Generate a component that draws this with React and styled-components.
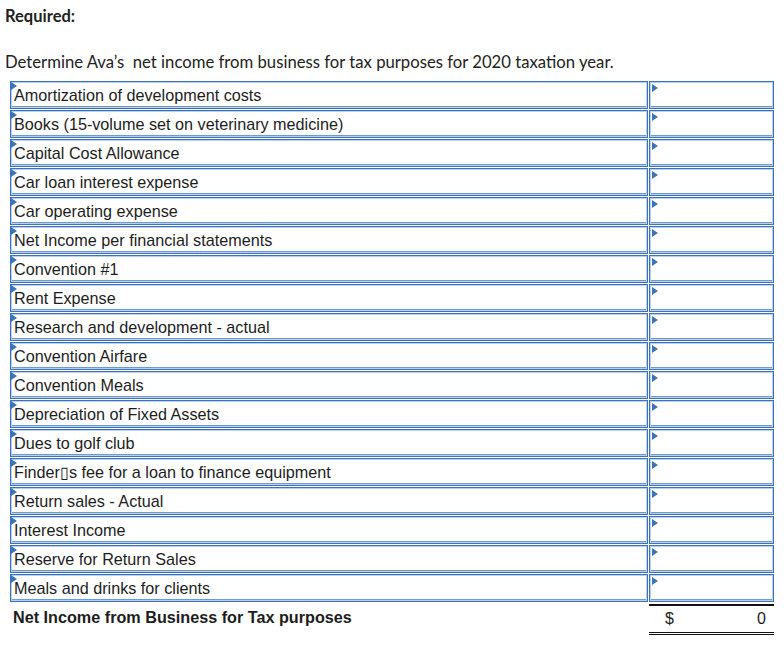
import React from 'react';
import styled, { createGlobalStyle } from 'styled-components';

const GlobalStyle = createGlobalStyle`
  body {
    margin: 0;
    background: #fff;
    font-family: "Liberation Sans", Arial, sans-serif;
  }
`;

const Page = styled.div`
  width: 784px;
  height: 664px;
  padding: 5px 0 0 5px;
  box-sizing: border-box;
`;

const Heading = styled.div`
  font-family: Lato, "Open Sans", sans-serif;
  font-weight: 700;
  font-size: 16.5px;
  color: #222;
  height: 22px;
  line-height: 22px;
`;

const Instruction = styled.div`
  font-family: Lato, "Open Sans", sans-serif;
  font-size: 16.7px;
  color: #222;
  margin-top: 25px;
  line-height: 20px;
`;

const Table = styled.div`
  display: grid;
  grid-template-columns: 638px 125px;
  column-gap: 1px;
  row-gap: 1px;
  margin: 9px 0 0 5px;
`;

const Cell = styled.div`
  position: relative;
  height: 28px;
  box-sizing: border-box;
  border: 1px solid #3c74bb;
  box-shadow: inset 0 0 0 1px #b9cfea, inset 0 -1px 0 1px #6f9ad0;
  background: #fff;
  display: flex;
  align-items: center;
  padding-left: 3px;
  font-size: 16.2px;
  color: #1d1d1d;
  white-space: nowrap;
`;

const Marker = styled.span`
  position: absolute;
  top: ${(p) => (p.inset ? 2 : 0)}px;
  left: ${(p) => (p.inset ? 2 : 0)}px;
  width: 0;
  height: 0;
  border-top: 4px solid transparent;
  border-bottom: 4px solid transparent;
  border-left: 6px solid #3c74bb;
`;

const TotalLabel = styled.div`
  font-weight: 700;
  font-size: 16.2px;
  color: #1d1d1d;
  height: 28px;
  display: flex;
  align-items: center;
  padding-left: 3px;
`;

const TotalValue = styled.div`
  height: 26px;
  margin-top: 1px;
  border-top: 2px solid #111;
  border-bottom: 3px double #111;
  display: flex;
  justify-content: space-between;
  align-items: center;
  padding: 0 8px 0 16px;
  font-size: 16px;
  color: #1d1d1d;
`;

const items = [
  'Amortization of development costs',
  'Books (15-volume set on veterinary medicine)',
  'Capital Cost Allowance',
  'Car loan interest expense',
  'Car operating expense',
  'Net Income per financial statements',
  'Convention #1',
  'Rent Expense',
  'Research and development - actual',
  'Convention Airfare',
  'Convention Meals',
  'Depreciation of Fixed Assets',
  'Dues to golf club',
  'Finder\u25AFs fee for a loan to finance equipment',
  'Return sales - Actual',
  'Interest Income',
  'Reserve for Return Sales',
  'Meals and drinks for clients',
];

export default function App() {
  return (
    <Page>
      <GlobalStyle />
      <Heading>Required:</Heading>
      <Instruction>Determine Ava’s&nbsp; net income from business for tax purposes for 2020 taxation year.</Instruction>
      <Table>
        {items.map((label) => (
          <React.Fragment key={label}>
            <Cell>
              <Marker />
              {label}
            </Cell>
            <Cell>
              <Marker inset />
            </Cell>
          </React.Fragment>
        ))}
        <TotalLabel>Net Income from Business for Tax purposes</TotalLabel>
        <TotalValue>
          <span>$</span>
          <span>0</span>
        </TotalValue>
      </Table>
    </Page>
  );
}
